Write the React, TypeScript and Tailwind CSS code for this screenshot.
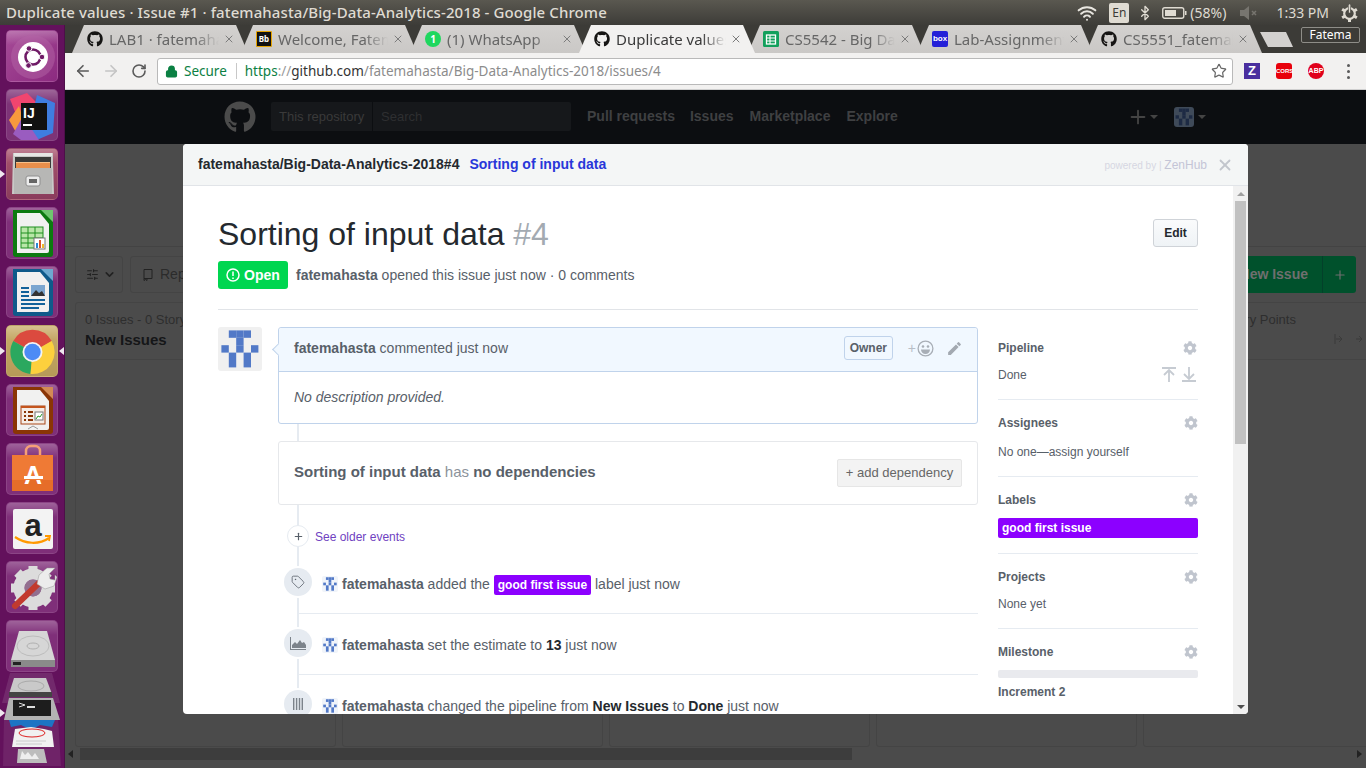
import React from "react";
import { FaCog, FaGithub } from "react-icons/fa";
import { MdEdit } from "react-icons/md";
import { Tag, X, Star, ArrowLeft, ArrowRight, RotateCw, Lock, Plus, Wifi, Bluetooth, SlidersHorizontal, ChevronDown } from "lucide-react";

const PATTERN: [number, number][] = [
  [1, 0], [2, 0], [3, 0], [2, 1], [0, 2], [2, 2], [4, 2], [1, 3], [3, 3], [1, 4], [3, 4],
];

function Identicon({ size, bg = "#f0f0f0", fg = "#5279c7", radius = 3 }: { size: number; bg?: string; fg?: string; radius?: number }) {
  return (
    <svg width={size} height={size} viewBox="0 0 44 44" className="shrink-0">
      <rect width="44" height="44" rx={radius * (44 / size)} fill={bg} />
      {PATTERN.map(([c, r]) => (
        <rect key={`${c}-${r}`} x={3.4 + c * 7.4} y={3.4 + r * 7.4} width="7.4" height="7.4" fill={fg} />
      ))}
    </svg>
  );
}

function Tile({ className, children }: { className: string; children: React.ReactNode }) {
  return (
    <div className={`relative w-[52px] h-[52px] rounded-[5px] shrink-0 overflow-hidden border border-white/10 ${className}`}>
      <div className="absolute inset-x-0 top-0 h-[14px] bg-gradient-to-b from-white/25 to-transparent" />
      <div className="absolute inset-0">{children}</div>
    </div>
  );
}

function Doc({ color, corner, children }: { color: string; corner: string; children: React.ReactNode }) {
  return (
    <svg width="52" height="52" viewBox="0 0 52 52">
      <path d="M6 2h29l1 0 10 12v32a3 3 0 0 1-3 3H9a3 3 0 0 1-3-3z" fill={color} />
      <path d="M34 2h12v12z" fill={corner} />
      <path d="M10 5h23l9 11v27a2 2 0 0 1-2 2H10z" fill="#f1f1f0" />
      {children}
    </svg>
  );
}

function Launcher() {
  return (
    <aside className="relative w-[65px] shrink-0 bg-[#63115c] border-r border-[#4d0f49] flex flex-col items-center pr-[1px] pt-[5px] gap-[7px] overflow-hidden">
      <Tile className="bg-gradient-to-br from-[#a64a97] to-[#8c2a80]">
        <svg width="52" height="52" viewBox="0 0 52 52">
          <circle cx="26" cy="26" r="22" fill="#b363a6" opacity=".5" />
          <circle cx="26" cy="26" r="15" fill="#fff" />
          <circle cx="26" cy="26" r="7.5" fill="none" stroke="#6f1a66" strokeWidth="2.6" />
          <circle cx="22" cy="17.5" r="2.8" fill="#6f1a66" stroke="#fff" />
          <circle cx="21.5" cy="34.5" r="2.8" fill="#6f1a66" stroke="#fff" />
          <circle cx="35" cy="26" r="2.8" fill="#6f1a66" stroke="#fff" />
        </svg>
      </Tile>
      <Tile className="bg-[#7d3377]">
        <svg width="52" height="52" viewBox="0 0 52 52">
          <path d="M3 9l17-6 12 12-22 12z" fill="#f0456f" />
          <path d="M2 30l10-14 8 26-10 2z" fill="#f79a3d" />
          <path d="M30 5l18 8-2 30-14 6-12-2z" fill="#3f7de0" />
          <path d="M6 44l10-18 16 24-18 0z" fill="#9a5cc0" />
          <rect x="14" y="13" width="26" height="27" fill="#111" />
          <text x="16" y="28" fontFamily="Liberation Sans, sans-serif" fontWeight="700" fontSize="14" fill="#fff">IJ</text>
          <rect x="16" y="34" width="9" height="2" fill="#fff" />
        </svg>
      </Tile>
      <Tile className="bg-gradient-to-b from-[#a9566f] to-[#8a3c5c]">
        <svg width="52" height="52" viewBox="0 0 52 52">
          <path d="M6 4h40v8l1 33H5z" fill="#c9c9c7" />
          <rect x="7" y="4" width="38" height="3" fill="#e6e6e4" />
          <rect x="8" y="8" width="36" height="12" fill="#3a3a38" />
          <rect x="9" y="13" width="34" height="1" fill="#f7c08a" />
          <rect x="9" y="14" width="34" height="6" fill="#e88f4c" />
          <rect x="7" y="19" width="38" height="26" rx="1" fill="#b7b7b5" />
          <rect x="19" y="27" width="14" height="10" rx="2" fill="#ececec" stroke="#8f8f8f" />
          <rect x="22" y="30" width="8" height="4" fill="#666" />
        </svg>
      </Tile>
      <Tile className="bg-[#7f2f79]">
        <Doc color="#0c7a10" corner="#6fc56f">
          <rect x="14" y="19" width="22" height="21" fill="#b9e6a8" stroke="#1f8f1f" strokeWidth="1" />
          <path d="M14 25h22M14 30h22M14 35h22M21 19v21M28 19v21" stroke="#1f8f1f" strokeWidth="1" />
          <rect x="27" y="30" width="11" height="11" fill="#fff" stroke="#777" />
          <rect x="29" y="35" width="2" height="5" fill="#2a8ad4" />
          <rect x="32" y="32" width="2" height="8" fill="#d9542b" />
          <rect x="35" y="36" width="2" height="4" fill="#eeb92c" />
        </Doc>
      </Tile>
      <Tile className="bg-[#7f2f79]">
        <Doc color="#0f5a8a" corner="#6ea9d0">
          <path d="M14 20h8v2h-8zM14 24h8v2h-8zM14 28h8v2h-8zM14 32h24v2H14zM14 36h24v2H14zM14 40h18v2H14z" fill="#12629a" />
          <rect x="24" y="18" width="14" height="11" fill="#7ba6d0" />
          <path d="M24 29l5-6 3 3 3-2 3 5z" fill="#333" />
        </Doc>
      </Tile>
      <Tile className="bg-gradient-to-b from-[#c9ac6a] to-[#b69a58]">
        <svg width="52" height="52" viewBox="0 0 52 52">
          <path d="M25.5 26L44.7 15A22 22 0 0 0 6.3 15Z" fill="#db4a3f" />
          <path d="M25.5 26L6.3 15A22 22 0 0 0 23.5 47.9Z" fill="#2ba85f" />
          <path d="M25.5 26L23.5 47.9A22 22 0 0 0 44.7 15Z" fill="#fdd03d" />
          <circle cx="25.5" cy="26" r="10" fill="#f4f4f4" />
          <circle cx="25.5" cy="26" r="8.2" fill="#4c8bf5" />
        </svg>
      </Tile>
      <Tile className="bg-[#7f2f79]">
        <Doc color="#8a3505" corner="#d28a55">
          <rect x="14" y="21" width="24" height="18" fill="#f5ede6" stroke="#a9481a" strokeWidth="1" />
          <rect x="14" y="21" width="24" height="2" fill="#c4541c" />
          <path d="M17 26h2v2h-2zM21 26h5v2h-5zM17 30h2v2h-2zM21 30h5v2h-5zM17 34h2v2h-2zM21 34h5v2h-5z" fill="#8a3505" />
          <rect x="28" y="27" width="8" height="8" fill="#fff" stroke="#777" />
          <path d="M29 34l2-3 2 1 2-3" stroke="#2a9a2a" fill="none" />
          <path d="M21 44l5-3 5 3" stroke="#999" fill="none" />
        </Doc>
      </Tile>
      <Tile className="bg-[#7f2f79]">
        <svg width="52" height="52" viewBox="0 0 52 52">
          <path d="M19 12V7a5 5 0 0 1 5-5h4a5 5 0 0 1 5 5v5" fill="none" stroke="#f5a077" strokeWidth="2.5" />
          <path d="M5 11h41v36H5z" fill="#ef7a35" />
          <path d="M5 36h41v11H5z" fill="#e66d29" />
          <text x="26" y="40" textAnchor="middle" fontFamily="Liberation Sans, sans-serif" fontWeight="700" fontSize="25" fill="#fff">A</text>
          <rect x="17" y="32" width="19" height="3" fill="#fff" />
          <rect x="17" y="35" width="19" height="1" fill="#ef7a35" />
        </svg>
      </Tile>
      <Tile className="bg-[#7f2f79]">
        <svg width="52" height="52" viewBox="0 0 52 52">
          <rect x="6" y="6" width="40" height="40" rx="2" fill="#f3f3f3" />
          <text x="26" y="33" textAnchor="middle" fontFamily="Liberation Sans, sans-serif" fontWeight="700" fontSize="31" fill="#222">a</text>
          <path d="M8 34c10 7 24 8 34 1" fill="none" stroke="#f90" strokeWidth="2.2" />
          <path d="M38 33l5 0-1 5" fill="none" stroke="#f90" strokeWidth="1.8" />
        </svg>
      </Tile>
      <Tile className="bg-[#7f2f79]">
        <svg width="52" height="52" viewBox="0 0 52 52">
          <g transform="translate(26 26)">
            {[0, 45, 90, 135, 180, 225, 270, 315].map((a) => (
              <rect key={a} x="-4.5" y="-22" width="9" height="9" fill="#dcdcdc" transform={`rotate(${a})`} />
            ))}
            <circle r="14" fill="none" stroke="#dcdcdc" strokeWidth="11" />
            <circle r="8.5" fill="#9a8a98" opacity=".7" />
          </g>
          <path d="M8 44L32 21" stroke="#c23a2e" strokeWidth="6" strokeLinecap="round" />
          <path d="M30 22l2-9 8-7 8 0-6 6 1 5 5 1 0-5 2 2-3 9-9 3z" fill="#ececec" stroke="#999" strokeWidth=".5" />
        </svg>
      </Tile>
      <Tile className="bg-[#7f2f79]">
        <svg width="52" height="52" viewBox="0 0 52 52">
          <path d="M12 10h28l8 29v7H4v-7z" fill="#d6d6d6" />
          <ellipse cx="26" cy="25" rx="16" ry="10" fill="none" stroke="#bcbcbc" />
          <ellipse cx="26" cy="25" rx="6" ry="3" fill="none" stroke="#b0b0b0" />
          <rect x="4" y="39" width="44" height="7" fill="#8a8a8a" />
          <rect x="6" y="41" width="8" height="3" fill="#222" />
        </svg>
      </Tile>
      {/* collapsed end of the launcher */}
      <svg width="64" height="95" viewBox="0 0 64 95" className="absolute left-0 top-[648px]">
        <path d="M10 0h42l8 30H2z" fill="#fff" opacity=".1" />
        <path d="M4 45h54l3 48H3z" fill="#fff" opacity=".08" />
        <path d="M14 5h32l6 16H9z" fill="#c9c9c9" />
        <ellipse cx="31" cy="13" rx="13" ry="5" fill="none" stroke="#aaa" />
        <rect x="9" y="19" width="43" height="5" fill="#444" />
        <path d="M9 47h46l-3 7-12-2-9 5-10-5-10 2z" fill="#1d74c4" />
        <path d="M15 56l16-2 13 2 8 2 2 16H12z" fill="#f1f1f1" />
        <ellipse cx="32" cy="60" rx="13" ry="4" fill="none" stroke="#d22" strokeWidth="1" />
        <path d="M16 68h30M16 71h26" stroke="#ccc" />
        <path d="M18 76h26l3 14H17z" fill="#bdbdbd" />
        <path d="M22 78l3 4 3-3 4 5 3-4 4 6H20z" fill="#eee" />
        <path d="M9 25h44l7 22H4z" fill="#b3b3b3" />
        <rect x="13" y="27" width="38" height="16" fill="#1d1d1d" />
        <path d="M19 30l6 2-6 2" stroke="#ddd" fill="none" />
        <rect x="27" y="33" width="8" height="2" fill="#ddd" />
      </svg>
      <span className="absolute left-0 top-[145px] border-y-[4px] border-l-[5px] border-y-transparent border-l-white/90" />
      <span className="absolute left-0 top-[322px] border-y-[4px] border-l-[5px] border-y-transparent border-l-white/90" />
      <span className="absolute left-[59px] top-[322px] border-y-[4px] border-r-[5px] border-y-transparent border-r-white/90" />
      <span className="absolute left-0 top-[684px] border-y-[4px] border-l-[5px] border-y-transparent border-l-white/90" />
    </aside>
  );
}

function TopPanel() {
  return (
    <header className="h-[25px] shrink-0 bg-gradient-to-b from-[#5a5850] to-[#3d3c38] flex items-center pl-[6px] text-[#dfdbd2] [font-family:'Noto_Sans',sans-serif]">
      <div className="text-[15px] font-medium tracking-[0.1px] flex-1">Duplicate values · Issue #1 · fatemahasta/Big-Data-Analytics-2018 - Google Chrome</div>
      <Wifi size={20} strokeWidth={2.4} className="text-[#e8e6e0] mr-[12px]" />
      <div className="w-[20px] h-[20px] bg-[#dfdbd2] rounded-[2px] text-[#3c3b37] text-[12px] flex items-center justify-center mr-[8px]">En</div>
      <Bluetooth size={16} className="text-[#dfdbd2] mr-[9px]" />
      <svg width="25" height="14" viewBox="0 0 25 14" className="mr-[3px]">
        <rect x=".75" y="1.75" width="21" height="10.5" rx="2" fill="none" stroke="#dfdbd2" strokeWidth="1.4" />
        <rect x="3" y="4" width="11" height="6" fill="#dfdbd2" />
        <rect x="23" y="5" width="1.5" height="4" fill="#dfdbd2" />
      </svg>
      <span className="text-[14px] mr-[13px]">(58%)</span>
      <svg width="20" height="14" viewBox="0 0 20 14" className="mr-[17px]">
        <path d="M1 4h4l5-4v14l-5-4H1z" fill="#77756f" />
        <path d="M13 5l4 4M17 5l-4 4" stroke="#77756f" strokeWidth="1.5" />
      </svg>
      <span className="text-[14px] mr-[12px]">1:33 PM</span>
      <svg width="17" height="18" viewBox="0 0 17 18" className="mr-[8px]">
        {[0, 60, 120, 180, 240, 300].map((a) => (
          <rect key={a} x="7" y="1" width="3" height="4" fill="#dfdbd2" transform={`rotate(${a} 8.5 9.5)`} />
        ))}
        <circle cx="8.5" cy="9.5" r="5.3" fill="none" stroke="#dfdbd2" strokeWidth="2.2" />
        <rect x="7.6" y="0" width="1.8" height="9" fill="#dfdbd2" stroke="#4b4a44" strokeWidth=".6" />
      </svg>
    </header>
  );
}

function ChromeTab({ icon, title, active, z }: { icon: React.ReactNode; title: string; active?: boolean; z: string }) {
  return (
    <div
      className={`relative ${z} h-[28px] w-[176px] -ml-[7px] first:ml-0 flex items-center pl-[15px] pr-[12px] text-[15px] [clip-path:polygon(0_100%,12px_0,calc(100%-12px)_0,100%_100%)] ${
        active ? "bg-[#f2f1f0] text-[#3a3a3a]" : "bg-gradient-to-b from-[#d3d1cf] to-[#cac8c6] text-[#666]"
      }`}
    >
      <span className="w-[16px] h-[16px] shrink-0 flex items-center justify-center">{icon}</span>
      <span className="ml-[6px] flex-1 overflow-hidden whitespace-nowrap [mask-image:linear-gradient(to_right,black_78%,transparent)]">{title}</span>
      <X size={12} strokeWidth={2} className="text-[#7c7c7c] ml-[4px] mr-[1px] shrink-0" />
    </div>
  );
}

function TabStrip() {
  const gh = <FaGithub size={16} className="text-[#161514]" />;
  return (
    <div className="h-[28px] shrink-0 bg-[#3c3b37] flex items-start pl-[7px] [font-family:'Noto_Sans',sans-serif]">
      <ChromeTab z="z-[7]" icon={gh} title="LAB1 · fatemahasta" />
      <ChromeTab
        z="z-[6]"
        title="Welcome, Fatema"
        icon={<span className="w-[16px] h-[16px] bg-[#111] border border-[#e6a400] rounded-[1px] text-white text-[8px] font-bold leading-[14px] text-center">Bb</span>}
      />
      <ChromeTab
        z="z-[5]"
        title="(1) WhatsApp"
        icon={<span className="w-[16px] h-[16px] rounded-full bg-[#1fd75f] text-white text-[10px] font-bold leading-[16px] text-center">1</span>}
      />
      <ChromeTab z="z-[8]" active icon={gh} title="Duplicate values · Issue" />
      <ChromeTab
        z="z-[4]"
        title="CS5542 - Big Data"
        icon={
          <svg width="16" height="16" viewBox="0 0 16 16">
            <rect width="16" height="16" rx="1.5" fill="#12a05c" />
            <rect x="3.5" y="4" width="9" height="9" fill="none" stroke="#fff" strokeWidth="1.3" />
            <path d="M3.5 7h9M3.5 10h9M7 4v9" stroke="#fff" strokeWidth="1.1" />
          </svg>
        }
      />
      <ChromeTab
        z="z-[3]"
        title="Lab-Assignment"
        icon={<span className="w-[16px] h-[16px] rounded-[2px] bg-[#2420d8] text-white text-[8px] font-bold leading-[16px] text-center [font-family:'Liberation_Sans',sans-serif]">box</span>}
      />
      <ChromeTab z="z-[2]" icon={gh} title="CS5551_fatemahasta" />
      <div className="w-[33px] h-[15px] -ml-[2px] mt-[7px] bg-[#d3d1cf] [clip-path:polygon(0_0,26px_0,100%_100%,8px_100%)]" />
      <div className="ml-auto mr-[6px] mt-[2px] w-[59px] h-[16px] rounded-[2px] border border-[#8e8d88] text-white text-[12px] leading-[14px] text-center">Fatema</div>
    </div>
  );
}

function Toolbar() {
  return (
    <div className="h-[37px] shrink-0 bg-[#f2f1f0] border-b border-[#cfcfcf] flex items-center pl-[9px] [font-family:'Noto_Sans',sans-serif]">
      <ArrowLeft size={18} strokeWidth={2.2} className="text-[#5a5a5a]" />
      <ArrowRight size={18} strokeWidth={2.2} className="text-[#c4c4c4] ml-[10px]" />
      <RotateCw size={16} strokeWidth={2.4} className="text-[#5a5a5a] ml-[11px]" />
      <div className="w-[1076px] h-[27px] ml-[10px] bg-white rounded-[3px] border border-[#b9b9b9] flex items-center pl-[7px] pr-[5px]">
        <Lock size={13} strokeWidth={2.6} className="text-[#0b8043] fill-[#0b8043]" />
        <span className="ml-[6px] text-[13.5px] text-[#0b8043]">Secure</span>
        <span className="w-px h-[16px] bg-[#c8c8c8] ml-[9px]" />
        <span className="ml-[8px] text-[13.5px] whitespace-nowrap">
          <span className="text-[#0b8043]">https</span>
          <span className="text-[#9a9a9a]">://</span>
          <span className="text-[#333]">github.com</span>
          <span className="text-[#8c8c8c]">/fatemahasta/Big-Data-Analytics-2018/issues/4</span>
        </span>
        <Star size={16} strokeWidth={1.8} className="ml-auto text-[#666]" />
      </div>
      <span className="ml-[11px] w-[16px] h-[16px] bg-[#4a2f9f] text-white text-[13px] font-bold leading-[16px] text-center [font-family:'Liberation_Sans',sans-serif]">Z</span>
      <span className="ml-[16px] w-[16px] h-[16px] rounded-[3px] bg-[#e8000b] text-white text-[6px] font-bold leading-[16px] text-center [font-family:'Liberation_Sans',sans-serif]">CORS</span>
      <span className="ml-[16px] w-[16px] h-[16px] rounded-full bg-[#e0001b] text-white text-[7px] font-bold leading-[16px] text-center [font-family:'Liberation_Sans',sans-serif]">ABP</span>
      <span className="ml-[23px] flex flex-col gap-[3px]">
        <i className="w-[3px] h-[3px] rounded-full bg-[#5a5a5a]" />
        <i className="w-[3px] h-[3px] rounded-full bg-[#5a5a5a]" />
        <i className="w-[3px] h-[3px] rounded-full bg-[#5a5a5a]" />
      </span>
    </div>
  );
}

function GithubBehind() {
  return (
    <div className="flex-1 flex flex-col bg-[#4b4b4b] overflow-hidden [font-family:'Liberation_Sans',sans-serif]">
      <div className="h-[54px] shrink-0 bg-[#0c0e11] flex items-center pb-[1px] pl-[159px] text-[#3f4042] text-[14px] font-bold">
        <FaGithub size={32} className="text-[#4b4b4b]" />
        <div className="ml-[15px] w-[300px] h-[29px] rounded-[2px] bg-[#16181b] flex items-center font-normal text-[13px]">
          <span className="w-[102px] pl-[8px] text-[#3a3a3a] border-r border-[#0c0e11] h-full leading-[29px]">This repository</span>
          <span className="pl-[8px] text-[#2e2f31]">Search</span>
        </div>
        <span className="ml-[16px]">Pull requests</span>
        <span className="ml-[15px]">Issues</span>
        <span className="ml-[16px]">Marketplace</span>
        <span className="ml-[16px]">Explore</span>
        <Plus size={22} strokeWidth={2} className="text-[#444] ml-[229px]" />
        <span className="ml-[1px] border-x-[4px] border-t-[4px] border-x-transparent border-t-[#444]" />
        <span className="ml-[16px]"><Identicon size={20} bg="#3f4a59" fg="#1d2a44" /></span>
        <span className="ml-[4px] border-x-[4px] border-t-[4px] border-x-transparent border-t-[#444]" />
      </div>
      <div className="h-[103px] shrink-0 border-b border-[#434343]" />
      <div className="h-[55px] shrink-0 pl-[10px] pt-[9px] pr-[10px] flex items-start text-[#2b2b2b] text-[14px]">
        <div className="w-[48px] h-[37px] border border-[#444] rounded-[3px] flex items-center pl-[10px]">
          <SlidersHorizontal size={13} className="text-[#222]" />
          <ChevronDown size={13} strokeWidth={3} className="ml-[4px] text-[#222]" />
        </div>
        <div className="ml-[7px] w-[120px] h-[37px] border border-[#444] rounded-[3px] flex items-center pl-[12px]">
          <svg width="10" height="12" viewBox="0 0 10 12" fill="none" stroke="#222"><path d="M1 .5h8v9H1zM1 9.5v2l1.5-1 1.500 1v-2" /></svg>
          <span className="ml-[7px]">Repo</span>
        </div>
        <div className="ml-auto w-[170px] h-[37px] bg-[#00512c] rounded-[3px] flex items-center text-[#6f6f6f] font-bold text-[14px]">
          <span className="flex-1 text-right pr-[14px] whitespace-nowrap">New Issue</span>
          <span className="w-[34px] shrink-0 border-l border-[#03402a] h-full flex items-center justify-center"><Plus size={14} /></span>
        </div>
      </div>
      <div className="flex-1 flex pl-[10px] gap-[6px] min-h-0">
        {[0, 1, 2, 3, 4].map((i) => (
          <div key={i} className="w-[261px] shrink-0 border border-[#444] rounded-[3px] h-[445px]">
            <div className="relative h-[57px] border-b border-[#444] pl-[9px] pt-[9px]">
              {i === 0 && (
                <>
                  <div className="text-[13px] leading-[16px] text-[#2e2e2e]">0 Issues - 0 Story Points</div>
                  <div className="text-[15px] font-bold leading-[20px] mt-[2px] text-[#151618]">New Issues</div>
                </>
              )}
              {i === 4 && (
                <>
                  <div className="text-[13px] leading-[16px] pl-[62px] text-[#2e2e2e]">0 Story Points</div>
                  <svg width="30" height="10" viewBox="0 0 30 10" fill="none" stroke="#3b3b3b" className="absolute left-[190px] top-[31px]">
                    <path d="M1 0v10M2 5h6M5 2l3 3-3 3M22 5h6M25 2l3 3-3 3" />
                  </svg>
                </>
              )}
            </div>
          </div>
        ))}
      </div>
      <div className="h-[21px] shrink-0 flex items-start relative">
        <div className="w-full h-[12px] mt-[1px] flex items-center">
          <span className="ml-[3px] border-y-[4px] border-r-[5px] border-y-transparent border-r-[#222]" />
          <div className="ml-[7px] w-[772px] h-full bg-[#3d3d3d]" />
          <span className="ml-auto mr-[4px] border-y-[4px] border-l-[5px] border-y-transparent border-l-[#222]" />
        </div>
      </div>
    </div>
  );
}

function SideHead({ title, nudge }: { title: string; nudge?: boolean }) {
  return (
    <div className="h-[14px] flex items-center justify-between">
      <span className="text-[12px] font-bold text-[#586069]">{title}</span>
      <FaCog size={14} className={`text-[#c0c5ce] ${nudge ? "mr-[1px]" : ""}`} />
    </div>
  );
}

function Sidebar() {
  return (
    <div className="w-[200px] shrink-0 text-[12px] text-[#586069] leading-[14px]">
      <div className="pt-[14px] pb-[17px] border-b border-[#e6ebf1]">
        <SideHead title="Pipeline" nudge />
        <div className="mt-[12px] flex items-center justify-between">
          <span>Done</span>
          <span className="flex gap-[6px] pr-[2px]">
            <svg width="14" height="15" viewBox="0 0 14 15" stroke="#c6cbd2" strokeWidth="1.8" fill="none"><path d="M0 1h14M7 15V4M2 8l5-5 5 5" /></svg>
            <svg width="14" height="15" viewBox="0 0 14 15" stroke="#c6cbd2" strokeWidth="1.8" fill="none"><path d="M0 14h14M7 0v11M2 7l5 5 5-5" /></svg>
          </span>
        </div>
      </div>
      <div className="pt-[16px] pb-[17px] border-b border-[#e6ebf1]">
        <SideHead title="Assignees" />
        <div className="mt-[15px]">No one—assign yourself</div>
      </div>
      <div className="pt-[16px] pb-[15px] border-b border-[#e6ebf1]">
        <SideHead title="Labels" />
        <div className="mt-[11px] h-[20px] rounded-[2px] bg-[#8c00ff] text-white font-bold pl-[4px] leading-[20px]">good first issue</div>
      </div>
      <div className="pt-[16px] pb-[17px] border-b border-[#e6ebf1]">
        <SideHead title="Projects" />
        <div className="mt-[13px]">None yet</div>
      </div>
      <div className="pt-[16px]">
        <SideHead title="Milestone" />
        <div className="mt-[11px] h-[8px] rounded-[2px] bg-[#e9eaee]" />
        <div className="mt-[7px] font-bold">Increment 2</div>
      </div>
    </div>
  );
}

function EventRow({ icon, children, line = true }: { icon: React.ReactNode; children: React.ReactNode; line?: boolean }) {
  return (
    <div>
      <div className="flex items-center h-[28px] pl-[6px]">
        <span className="relative z-10 w-[28px] h-[28px] rounded-full bg-[#e6ebf1] ring-2 ring-white flex items-center justify-center shrink-0 text-[#586069]">{icon}</span>
        <span className="mt-[4px] ml-[10px]"><Identicon size={16} bg="#f0f4fa" radius={2} /></span>
        <span className="mt-[4px] ml-[4px] text-[14px] leading-[20px] text-[#586069] whitespace-nowrap">{children}</span>
      </div>
      {line && <div className="relative z-10 mt-[17px] mb-[15px] ml-[20px] h-px bg-[#e6ebf1]" />}
    </div>
  );
}

function IssueBody() {
  return (
    <div className="flex-1 min-w-0 overflow-hidden pl-[35px] pr-[35px] pt-[28px] text-[#586069]">
      <div className="flex items-start justify-between">
        <h1 className="text-[32px] leading-[40px] text-[#24292e] font-normal">
          Sorting of input data <span className="text-[#a3aab1]">#4</span>
        </h1>
        <button className="mt-[5px] w-[45px] h-[28px] rounded-[3px] border border-[#cfd3d8] bg-gradient-to-b from-[#fafbfc] to-[#eff3f6] text-[12px] font-bold text-[#24292e]">Edit</button>
      </div>
      <div className="mt-[7px] h-[28px] flex items-center text-[14px]">
        <span className="w-[70px] h-[28px] rounded-[3px] bg-[#00d650] text-white font-bold flex items-center pl-[8px]">
          <svg width="14" height="14" viewBox="0 0 14 14" fill="none" stroke="#fff" strokeWidth="1.5">
            <circle cx="7" cy="7" r="6" />
            <path d="M7 3.500v4.500M7 9.500v1.500" />
          </svg>
          <span className="ml-[4px]">Open</span>
        </span>
        <span className="ml-[8px]"><b className="font-bold">fatemahasta</b> opened this issue just now · 0 comments</span>
      </div>
      <div className="mt-[20px] h-px bg-[#e1e4e8]" />
      <div className="mt-[17px] flex gap-[20px] items-start">
        <div className="w-[760px] shrink-0">
          <div className="flex gap-[16px]">
            <Identicon size={44} />
            <div className="relative w-[700px] h-[97px] border border-[#c0d3eb] rounded-[3px] bg-white z-10">
              <span className="absolute -left-[5px] top-[17px] w-[9px] h-[9px] rotate-45 bg-[#f1f8ff] border-l border-b border-[#c0d3eb]" />
              <div className="h-[44px] pb-[3px] bg-[#f1f8ff] border-b border-[#c0d3eb] rounded-t-[3px] flex items-center pl-[15px] pr-[15px] text-[14px]">
                <span><b className="font-bold">fatemahasta</b> commented just now</span>
                <span className="ml-auto mr-[1px] w-[49px] h-[24px] rounded-[3px] border border-[#c0d3eb] text-[12px] font-bold flex items-center justify-center">Owner</span>
                <span className="ml-[14px] text-[#b9bfc7] text-[14px] leading-none">+</span>
                <svg width="17" height="17" viewBox="0 0 17 17" className="ml-[1px]">
                  <circle cx="8.500" cy="8.500" r="7.400" fill="none" stroke="#a8aeb6" strokeWidth="1.300" />
                  <circle cx="6" cy="6.500" r="1.300" fill="#a8aeb6" />
                  <circle cx="11" cy="6.500" r="1.300" fill="#a8aeb6" />
                  <path d="M4 9.500h9a4.500 4.500 0 0 1-9 0z" fill="#a8aeb6" />
                </svg>
                <MdEdit size={17} className="ml-[12px] -mr-[1px] text-[#a3a9b1]" />
              </div>
              <div className="pl-[15px] pt-[17px] text-[14px] leading-[16px] italic">No description provided.</div>
            </div>
          </div>
          <div className="relative ml-[60px] pt-[17px]">
            <span className="absolute left-[19px] top-0 w-[2px] h-[300px] bg-[#e6ebf1]" />
            <div className="relative z-10 h-[64px] border border-[#e6e8eb] rounded-[3px] bg-white flex items-center pl-[15px] pr-[15px] text-[15px] font-bold">
              <span className="-mt-[1px]">Sorting of input data <span className="font-normal text-[#8c939b]">has</span> no dependencies</span>
              <span className="ml-auto w-[125px] h-[28px] bg-[#f3f3f3] border border-[#e6e6e6] rounded-[2px] text-[13px] font-normal text-[#666] flex items-center justify-center">+ add dependency</span>
            </div>
            <div className="relative z-10 mt-[20px] h-[22px] flex items-center pl-[9px]">
              <span className="w-[22px] h-[22px] rounded-full bg-white border border-[#e6ebf1] flex items-center justify-center"><Plus size={11} strokeWidth={2.600} className="text-[#586069]" /></span>
              <span className="ml-[6px] mt-[1px] text-[12px] text-[#6f42c1]">See older events</span>
            </div>
            <div className="mt-[21px]">
              <EventRow icon={<Tag size={14} strokeWidth={1.400} />}>
                <b className="font-bold">fatemahasta</b> added the{" "}
                <span className="inline-block h-[20px] px-[4px] rounded-[2px] bg-[#8c00ff] text-white text-[12px] font-bold leading-[20px] align-top translate-y-[1px]">good first issue</span>{" "}
                label just now
              </EventRow>
              <EventRow
                icon={
                  <svg width="16" height="13" viewBox="0 0 16 13" fill="#7c838b">
                    <path d="M0 0h1v12h15v1H0z" />
                    <path d="M2 11V8l3-3 2 2 3-4 2 3 2-1 2 3v3z" />
                  </svg>
                }
              >
                <b className="font-bold">fatemahasta</b> set the estimate to <b className="font-bold text-[#24292e]">13</b> just now
              </EventRow>
              <EventRow
                line={false}
                icon={
                  <svg width="10" height="12" viewBox="0 0 10 12" fill="#7c838b">
                    <path d="M0 0h1.400v12H0zM2.900 0h1.400v12H2.900zM5.800 0h1.400v12H5.800zM8.600 0H10v12H8.600z" />
                  </svg>
                }
              >
                <b className="font-bold">fatemahasta</b> changed the pipeline from <b className="font-bold text-[#24292e]">New Issues</b> to <b className="font-bold text-[#24292e]">Done</b> just now
              </EventRow>
            </div>
          </div>
        </div>
        <Sidebar />
      </div>
    </div>
  );
}

function Modal() {
  return (
    <div className="absolute left-[118px] top-[54px] w-[1065px] h-[570px] bg-white rounded-[4px] flex flex-col overflow-hidden [font-family:'Liberation_Sans',sans-serif]">
      <div className="h-[42px] shrink-0 bg-[#f4f6f6] border-b border-[#e1e4e8] flex items-center pl-[15px] pr-[14px] text-[14px]">
        <b className="font-bold text-[#24292e]">fatemahasta/Big-Data-Analytics-2018#4</b>
        <b className="font-bold text-[#2837d9] ml-[10px]">Sorting of input data</b>
        <span className="ml-auto text-[10px] text-[#d6d7e2]">powered by | <span className="text-[12px] text-[#c4c5d6]">ZenHub</span></span>
        <X size={18} strokeWidth={2.400} className="ml-[9px] text-[#c2c5cc]" />
      </div>
      <div className="flex-1 flex min-h-0">
        <IssueBody />
        <div className="w-[15px] shrink-0 bg-[#f1f1f1] flex flex-col items-center">
          <span className="mt-[6px] border-x-[4px] border-b-[4px] border-x-transparent border-b-[#a0a0a0]" />
          <div className="mt-[5px] w-[11px] h-[243px] bg-[#c1c1c1]" />
          <span className="mt-auto mb-[5px] border-x-[4px] border-t-[4px] border-x-transparent border-t-[#505050]" />
        </div>
      </div>
    </div>
  );
}

export default function App() {
  return (
    <div className="w-[1366px] h-[768px] flex flex-col overflow-hidden">
      <TopPanel />
      <div className="flex-1 flex min-h-0">
        <Launcher />
        <div className="flex-1 flex flex-col min-w-0">
          <TabStrip />
          <Toolbar />
          <div className="relative flex-1 flex min-h-0">
            <GithubBehind />
            <Modal />
          </div>
        </div>
      </div>
    </div>
  );
}
